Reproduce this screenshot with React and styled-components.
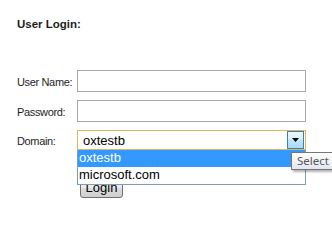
import React from "react";
import styled, { createGlobalStyle } from "styled-components";

const Global = createGlobalStyle`
  html, body { margin: 0; padding: 0; background: #ffffff; }
  body { font-family: "Liberation Sans", Arial, sans-serif; }
`;

const Page = styled.div`
  width: 332px;
  height: 220px;
  overflow: hidden;
  padding: 18px 0 0 17px;
  box-sizing: border-box;
  position: relative;
`;

const Title = styled.div`
  font-size: 11.5px;
  line-height: 13px;
  font-weight: bold;
  color: #1c1c1c;
`;

const Form = styled.div`
  margin-top: 39px;
  display: grid;
  grid-template-columns: 60px 229px;
  row-gap: 8px;
  align-items: center;
`;

const Label = styled.div`
  font-size: 11px;
  line-height: 13px;
  letter-spacing: -0.35px;
  color: #1e1e1e;
  padding-top: 2px;
`;

const TextInput = styled.div`
  height: 22px;
  box-sizing: border-box;
  border: 1px solid #a9a9a9;
  background: #ffffff;
`;

const SelectWrap = styled.div`
  position: relative;
  height: 20px;
`;

const SelectBox = styled.div`
  height: 20px;
  box-sizing: border-box;
  border: 1px solid #e2b658;
  background: #ffffff;
  display: flex;
  align-items: center;
  justify-content: space-between;
  padding: 0 1px 0 5px;
  font-size: 13px;
  color: #000000;
`;

const ArrowButton = styled.div`
  width: 17px;
  height: 18px;
  box-sizing: border-box;
  border: 1px solid #3c7fb1;
  background: linear-gradient(to bottom, #eaf6fd 0%, #d9f0fc 45%, #bee6fd 50%, #a7d9f5 100%);
  display: flex;
  align-items: center;
  justify-content: center;
`;

const DropList = styled.div`
  position: absolute;
  left: 0;
  top: 20px;
  width: 229px;
  box-sizing: border-box;
  border: 1px solid #7f9db9;
  border-top: none;
  background: #ffffff;
  z-index: 2;
`;

const Option = styled.div`
  height: 17px;
  line-height: 16px;
  padding-left: 1px;
  font-size: 13px;
  color: ${(p) => (p.$active ? "#ffffff" : "#000000")};
  background: ${(p) => (p.$active ? "#3399ff" : "transparent")};
`;

const Tooltip = styled.div`
  position: absolute;
  left: 214px;
  top: 22px;
  height: 18px;
  box-sizing: border-box;
  padding: 0 5px 0 5px;
  border: 1px solid #767676;
  background: linear-gradient(to bottom, #ffffff 0%, #e4e5f0 100%);
  box-shadow: 2px 2px 2px rgba(0, 0, 0, 0.3);
  font-family: "Noto Sans", "DejaVu Sans", sans-serif;
  font-size: 11.5px;
  line-height: 16px;
  color: #575757;
  white-space: nowrap;
  z-index: 3;
`;

const ButtonCell = styled.div`
  grid-column: 2;
  margin-top: 19px;
`;

const Button = styled.div`
  display: inline-flex;
  align-items: center;
  justify-content: center;
  margin-left: 3px;
  width: 43px;
  height: 21px;
  box-sizing: border-box;
  border: 1px solid #707070;
  border-radius: 3px;
  background: linear-gradient(to bottom, #f2f2f2 0%, #ebebeb 50%, #dddddd 51%, #cfcfcf 100%);
  font-size: 13px;
  color: #000000;
`;

export default function App() {
  return (
    <>
      <Global />
      <Page>
        <Title>User Login:</Title>
        <Form>
          <Label>User Name:</Label>
          <TextInput />
          <Label>Password:</Label>
          <TextInput />
          <Label>Domain:</Label>
          <SelectWrap>
            <SelectBox>
              <span>oxtestb</span>
              <ArrowButton>
                <svg width="7" height="4" viewBox="0 0 7 4">
                  <path d="M0 0 H7 L3.5 4 Z" fill="#000000" />
                </svg>
              </ArrowButton>
            </SelectBox>
            <DropList>
              <Option $active>oxtestb</Option>
              <Option>microsoft.com</Option>
            </DropList>
            <Tooltip>Select</Tooltip>
          </SelectWrap>
          <ButtonCell>
            <Button>Login</Button>
          </ButtonCell>
        </Form>
      </Page>
    </>
  );
}
